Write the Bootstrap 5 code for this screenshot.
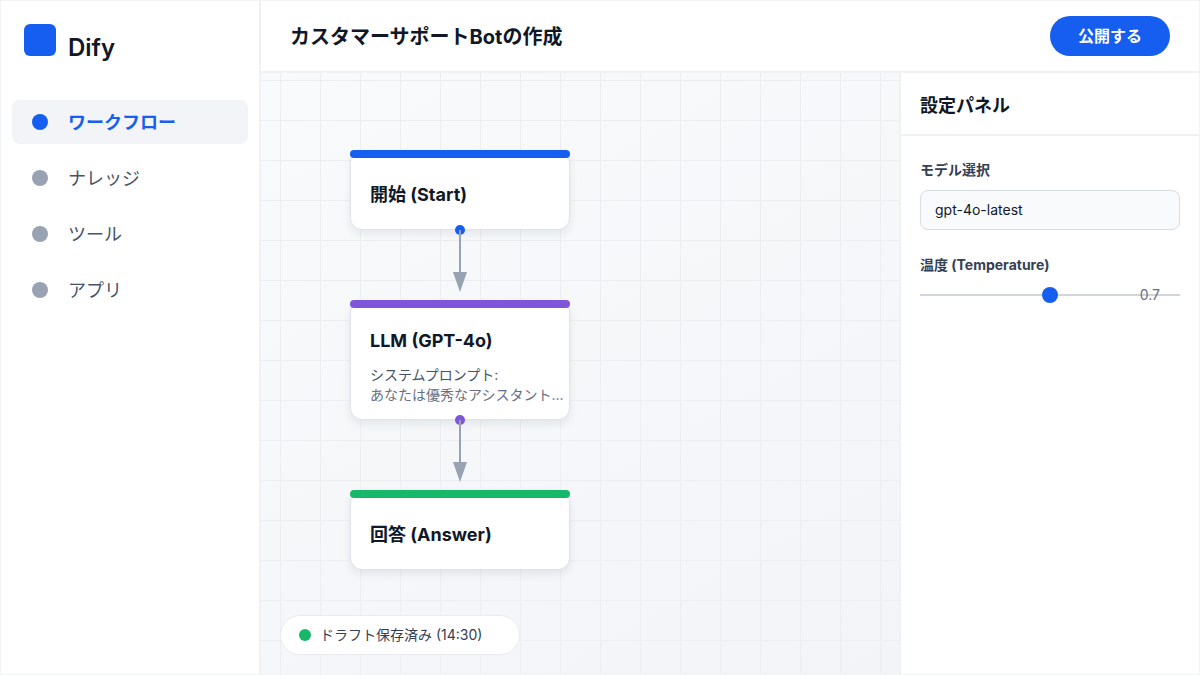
<!DOCTYPE html>
<html lang="ja">
<head>
<meta charset="utf-8">
<meta name="viewport" content="width=device-width, initial-scale=1">
<title>Dify - カスタマーサポートBotの作成</title>
<link href="https://cdn.jsdelivr.net/npm/bootstrap@5.3.0/dist/css/bootstrap.min.css" rel="stylesheet">
<style>
  :root {
    --brand: #155eef;
    --ink: #101828;
    --ink-mid: #344054;
    --ink-soft: #475467;
    --muted-dot: #98a2b3;
    --rule: #eff1f4;
  }
  body {
    font-family: Inter, "Noto Sans CJK JP", sans-serif;
    color: var(--ink);
    font-size: 14px;
    line-height: 20px;
  }
  .app-shell { border: 1px solid #f2f3f5; }
  .sidebar { width: 260px; border-right: 2px solid var(--rule); padding: 23px 11px 24px 11px; }
  .brand { gap: 12px; padding-left: 12px; font-size: 24px; line-height: 32px; font-weight: 600; color: var(--ink); }
  .side-nav { gap: 12px; margin-top: 36px; }
  .side-nav .nav-link {
    display: flex; align-items: center; gap: 20px;
    height: 44px; padding: 0 20px; border-radius: 8px;
    font-size: 18px; line-height: 24px; color: var(--ink-soft);
  }
  .side-nav .nav-link::before {
    content: ""; width: 16px; height: 16px; border-radius: 50%; background: var(--muted-dot);
  }
  .side-nav .nav-link span { padding-top: 2px; }
  .side-nav .nav-link.active { background: #f2f4f7; color: var(--brand); font-weight: 700; }
  .side-nav .nav-link.active::before { background: var(--brand); }

  .topbar { height: 72px; padding: 0 29px; border-bottom: 2px solid var(--rule); }
  .topbar h1 { padding-top: 2px; font-size: 20px; line-height: 28px; font-weight: 700; }
  .btn-publish {
    --bs-btn-bg: var(--brand); --bs-btn-color: #fff;
    --bs-btn-hover-bg: #004eeb; --bs-btn-hover-color: #fff;
    width: 120px; height: 40px; padding: 0; border: 0; font-size: 16px; line-height: 24px; font-weight: 700;
  }

  .board {
    padding: 77px 19px 19px;
    background:
      linear-gradient(90deg, #eceef1 1px, transparent 1px) 19px 7px / 40px 40px,
      linear-gradient(#eceef1 1px, transparent 1px) 19px 7px / 40px 40px,
      linear-gradient(150deg, #f9fafb, #f2f4f8);
  }
  .flow-lane { width: 220px; margin-left: 70px; }
  .flow-node {
    position: relative; min-height: 80px; background: #fff;
    border: 1px solid #dfe3e9; border-radius: 12px;
    box-shadow: 0 4px 8px rgba(16, 24, 40, .08);
  }
  .flow-node::before {
    content: ""; height: 8px; margin: -1px -1px 0; border-radius: 4px; background: var(--tone);
  }
  .flow-node h2 { font-size: 18px; line-height: 24px; font-weight: 700; }
  .node-body { padding: 2px 20px 0 19px; }
  .node-tall { min-height: 120px; }
  .node-tall .node-body { padding: 21px 0 0 19px; }
  .node-tall p { color: #667085; white-space: nowrap; }
  .node-tall p.prompt-label { color: var(--ink-soft); margin-top: 12px; }
  .tone-start { --tone: #155eef; }
  .tone-llm { --tone: #7f56d9; }
  .tone-answer { --tone: #17b86a; }
  .flow-port {
    position: absolute; left: 50%; bottom: -1px; width: 10px; height: 10px;
    border-radius: 50%; background: var(--tone); transform: translate(-50%, 50%);
  }
  .flow-link { position: relative; display: block; margin: 0 auto; }
  .save-pill {
    width: 240px; height: 40px; padding: 0 18px; gap: 9px;
    background: #fff; border: 1px solid #eaecf0; color: var(--ink-mid);
  }
  .save-pill::before {
    content: ""; width: 12px; height: 12px; border-radius: 50%; background: #17b86a;
  }

  .settings { width: 300px; border-left: 2px solid var(--rule); }
  .settings-head { height: 63px; padding: 4px 19px 0; border-bottom: 2px solid var(--rule); }
  .settings-head h2 { font-size: 18px; line-height: 24px; font-weight: 700; }
  .settings-form { padding: 24px 19px; }
  .settings-form label { display: block; font-weight: 700; color: var(--ink-mid); }
  .model-select {
    appearance: none; height: 40px; margin-top: 10px; padding: 0 14px; background: #f9fafb;
    border: 1px solid #d8dce3; border-radius: 8px; font-size: 14px; line-height: 20px; color: var(--ink);
  }
  .temp-field { margin-top: 25px; }
  .temp-range { height: 16px; margin-top: 12px; }
  .temp-range::-webkit-slider-runnable-track { height: 2px; background: #d0d5dd; border-radius: 0; }
  .temp-range::-webkit-slider-thumb { margin-top: -7px; background: var(--brand); border: 0; box-shadow: none; }
  .temp-value { position: absolute; right: 20px; bottom: -2px; color: #667085; pointer-events: none; }
</style>
</head>
<body>
<div class="app-shell d-flex min-vh-100 bg-white">
  <aside class="sidebar flex-shrink-0">
    <a href="#" class="brand d-flex align-items-baseline text-decoration-none">
      <svg width="32" height="32" viewBox="0 0 32 32" aria-hidden="true"><rect width="32" height="32" rx="6" fill="#155eef"/></svg>
      <span>Dify</span>
    </a>
    <nav class="side-nav nav flex-column" aria-label="メイン">
      <a class="nav-link active" aria-current="page" href="#"><span>ワークフロー</span></a>
      <a class="nav-link" href="#"><span>ナレッジ</span></a>
      <a class="nav-link" href="#"><span>ツール</span></a>
      <a class="nav-link" href="#"><span>アプリ</span></a>
    </nav>
  </aside>

  <div class="d-flex flex-column flex-grow-1">
    <header class="topbar d-flex align-items-center justify-content-between">
      <h1 class="mb-0">カスタマーサポートBotの作成</h1>
      <button type="button" class="btn btn-publish rounded-pill">公開する</button>
    </header>

    <div class="d-flex flex-grow-1">
      <main class="board d-flex flex-column flex-grow-1">
        <div class="flow-lane">
          <section class="flow-node tone-start d-flex flex-column">
            <div class="node-body d-flex align-items-center flex-grow-1"><h2 class="mb-0">開始 (Start)</h2></div>
            <span class="flow-port"></span>
          </section>
          <svg class="flow-link" width="14" height="70" viewBox="0 0 14 70" aria-hidden="true">
            <path d="M7 0V44" stroke="#98a2b3" stroke-width="2"/><path d="M0 42H14L7 62Z" fill="#98a2b3"/>
          </svg>
          <section class="flow-node node-tall tone-llm d-flex flex-column">
            <div class="node-body">
              <h2 class="mb-0">LLM (GPT-4o)</h2>
              <p class="prompt-label mb-0">システムプロンプト:</p>
              <p class="mb-0">あなたは優秀なアシスタント...</p>
            </div>
            <span class="flow-port"></span>
          </section>
          <svg class="flow-link" width="14" height="70" viewBox="0 0 14 70" aria-hidden="true">
            <path d="M7 0V44" stroke="#98a2b3" stroke-width="2"/><path d="M0 42H14L7 62Z" fill="#98a2b3"/>
          </svg>
          <section class="flow-node tone-answer d-flex flex-column">
            <div class="node-body d-flex align-items-center flex-grow-1"><h2 class="mb-0">回答 (Answer)</h2></div>
          </section>
        </div>
        <div class="save-pill d-flex align-items-center rounded-pill mt-auto" role="status">ドラフト保存済み (14:30)</div>
      </main>

      <aside class="settings flex-shrink-0">
        <div class="settings-head d-flex align-items-center"><h2 class="mb-0">設定パネル</h2></div>
        <form class="settings-form">
          <label for="model">モデル選択</label>
          <select id="model" class="model-select w-100 d-block">
            <option>gpt-4o-latest</option>
          </select>
          <div class="temp-field position-relative">
            <label for="temperature">温度 (Temperature)</label>
            <input id="temperature" type="range" class="temp-range form-range d-block" min="0" max="1.4" step="0.1" value="0.7">
            <output class="temp-value" for="temperature">0.7</output>
          </div>
        </form>
      </aside>
    </div>
  </div>
</div>
<script src="https://cdn.jsdelivr.net/npm/bootstrap@5.3.0/dist/js/bootstrap.bundle.min.js"></script>
</body>
</html>
